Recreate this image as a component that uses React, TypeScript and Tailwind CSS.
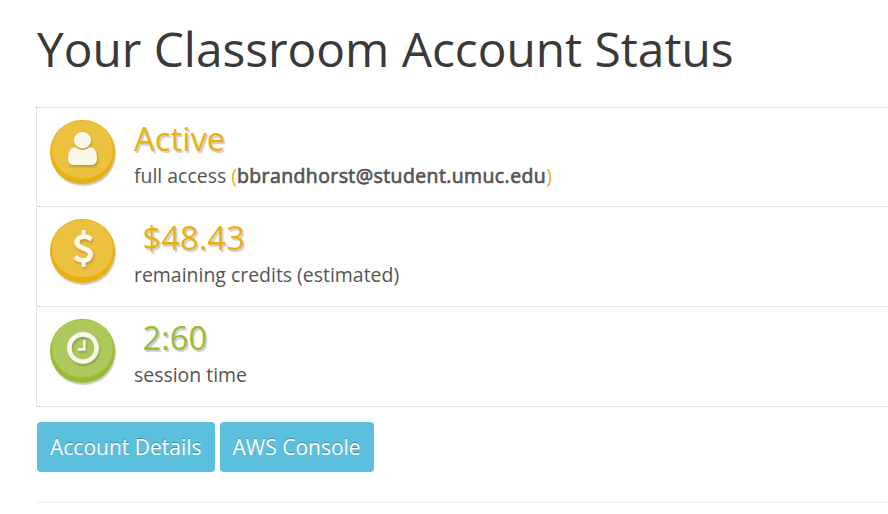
import type { ReactNode } from "react";

const icons = {
  user: {
    box: "0 0 1280 1536",
    size: "h-[33px] w-[29px] mt-[11px]",
    path: "M1280 1271q0 109-62.5 187t-150.5 78h-854q-88 0-150.5-78t-62.5-187q0-85 8.5-160.5t31.5-152 58.5-131 94-89 134.5-34.5q131 128 313 128t313-128q76 0 134.5 34.5t94 89 58.5 131 31.5 152 8.5 160.5zm-256-887q0 159-112.5 271.5t-271.5 112.5-271.5-112.5-112.5-271.5 112.5-271.5 271.5-112.5 271.5 112.5 112.5 271.5z",
  },
  dollar: {
    box: "0 0 978 1792",
    size: "h-[37px] w-[20px] mt-[10px]",
    path: "M978 1185q0 153-99.5 263.5t-258.5 136.5v175q0 14-9 23t-23 9h-135q-13 0-22.5-9.5t-9.5-22.5v-175q-66-9-127.5-31t-101.5-44.5-74-48-46.5-37.5-17.5-18q-17-21-2-41l103-135q7-10 23-12 15-2 24 9l2 2q113 99 243 125 37 8 74 8 81 0 142.5-43t61.5-122q0-28-15-53t-33.5-42-58.5-37.5-66-32-80-32.5q-39-16-61.5-25t-61.5-26.5-62.5-31-56.5-35.5-53.5-42.5-43.5-49-35.5-58-21-66.5-8.5-78q0-138 98-242t255-134v-180q0-13 9.5-22.5t22.5-9.5h135q14 0 23 9t9 23v176q57 6 110.5 23t87 33.5 63.5 37.5 39 29 15 14q17 18 5 38l-81 146q-8 15-23 16-14 3-27-7-3-3-14.5-12t-39-26.5-58.5-32-74.5-26-85.5-11.5q-95 0-155 43t-60 111q0 26 8.5 48t29.5 41.5 39.5 33 56 31 60.5 27 70 27.5q53 20 81 31.5t76 35 75.5 42.5 62 50 53 63.5 31.5 76.5 13 94z",
  },
  clock: {
    box: "0 128 1536 1536",
    size: "h-[32px] w-[32px] mt-[11.5px]",
    path: "M896 544v448q0 14-9 23t-23 9h-320q-14 0-23-9t-9-23v-64q0-14 9-23t23-9h224v-352q0-14 9-23t23-9h64q14 0 23 9t9 23zm416 352q0-148-73-273t-198-198-273-73-273 73-198 198-73 273 73 273 198 198 273 73 273-73 198-198 73-273zm224 0q0 209-103 385.5t-279.5 279.5-385.5 103-385.5-103-279.5-279.5-103-385.5 103-385.5 279.5-279.5 385.5-103 385.5 103 279.5 279.5 103 385.5z",
  },
};

type RowProps = {
  icon: keyof typeof icons;
  tone?: "amber" | "green";
  value: string;
  indent?: boolean;
  children: ReactNode;
};

function StatusRow({ icon, tone = "amber", value, indent = false, children }: RowProps) {
  const { box, size, path } = icons[icon];
  const green = tone === "green";
  return (
    <section className="flex h-[100px] border-b border-dotted border-[#ccc] pl-[13px] pt-[12px] first:h-[99px]">
      <div
        className={`flex h-[64px] w-[65px] shrink-0 justify-center rounded-full px-[2px] pb-[6px] pt-px shadow-[1px_2px_1px_#ccc] ${green ? "bg-[#9abc32]" : "bg-[#e8b110]"}`}
      >
        <div className={`flex w-full justify-center rounded-full ${green ? "bg-[#aec95b]" : "bg-[#ecc140]"}`}>
          <svg viewBox={box} preserveAspectRatio="none" className={`fill-[#fbf7ea] drop-shadow-[1px_2px_1px_rgba(0,0,0,0.2)] ${size}`}>
            <path d={path} />
          </svg>
        </div>
      </div>
      <div className="pl-[19px] text-[19.45px] leading-[28px] text-[#555]">
        <div
          className={`h-[42px] text-[32.8px] leading-[38px] [text-shadow:1.5px_1.5px_1px_#ccccd3] ${indent ? "pl-[8.5px]" : ""} ${green ? "text-[#9abc32]" : "text-[#e8b110]"}`}
        >
          {value}
        </div>
        <p className="whitespace-nowrap">{children}</p>
      </div>
    </section>
  );
}

function Button({ children }: { children: ReactNode }) {
  return (
    <button className="h-[50px] rounded-[4px] bg-[#5bc0de] px-[13px] pt-[2px] text-[21px] text-white [text-shadow:0_-1px_0_rgba(0,0,0,0.3)]">
      {children}
    </button>
  );
}

export default function App() {
  return (
    <main className="h-[514px] overflow-hidden bg-white pl-[37px] pt-[15px] font-['Open_Sans',sans-serif]">
      <h1 className="h-[92px] text-[47.8px] leading-[67px] text-[#393939]">Your Classroom Account Status</h1>
      <div className="-ml-px h-[300px] border-l border-t border-dotted border-[#ccc]">
        <StatusRow icon="user" value="Active">
          full access <span className="text-[#e8b110]">(</span>
          <span className="tracking-[0.42px] [-webkit-text-stroke:0.7px_#555]">bbrandhorst@student.umuc.edu</span>
          <span className="text-[#e8b110]">)</span>
        </StatusRow>
        <StatusRow icon="dollar" value="$48.43" indent>
          remaining credits (estimated)
        </StatusRow>
        <StatusRow icon="clock" tone="green" value="2:60" indent>
          session time
        </StatusRow>
      </div>
      <div className="mt-[15px] flex gap-[5px]">
        <Button>Account Details</Button>
        <Button>AWS Console</Button>
      </div>
      <hr className="mt-[30px] border-[#eee]" />
    </main>
  );
}
